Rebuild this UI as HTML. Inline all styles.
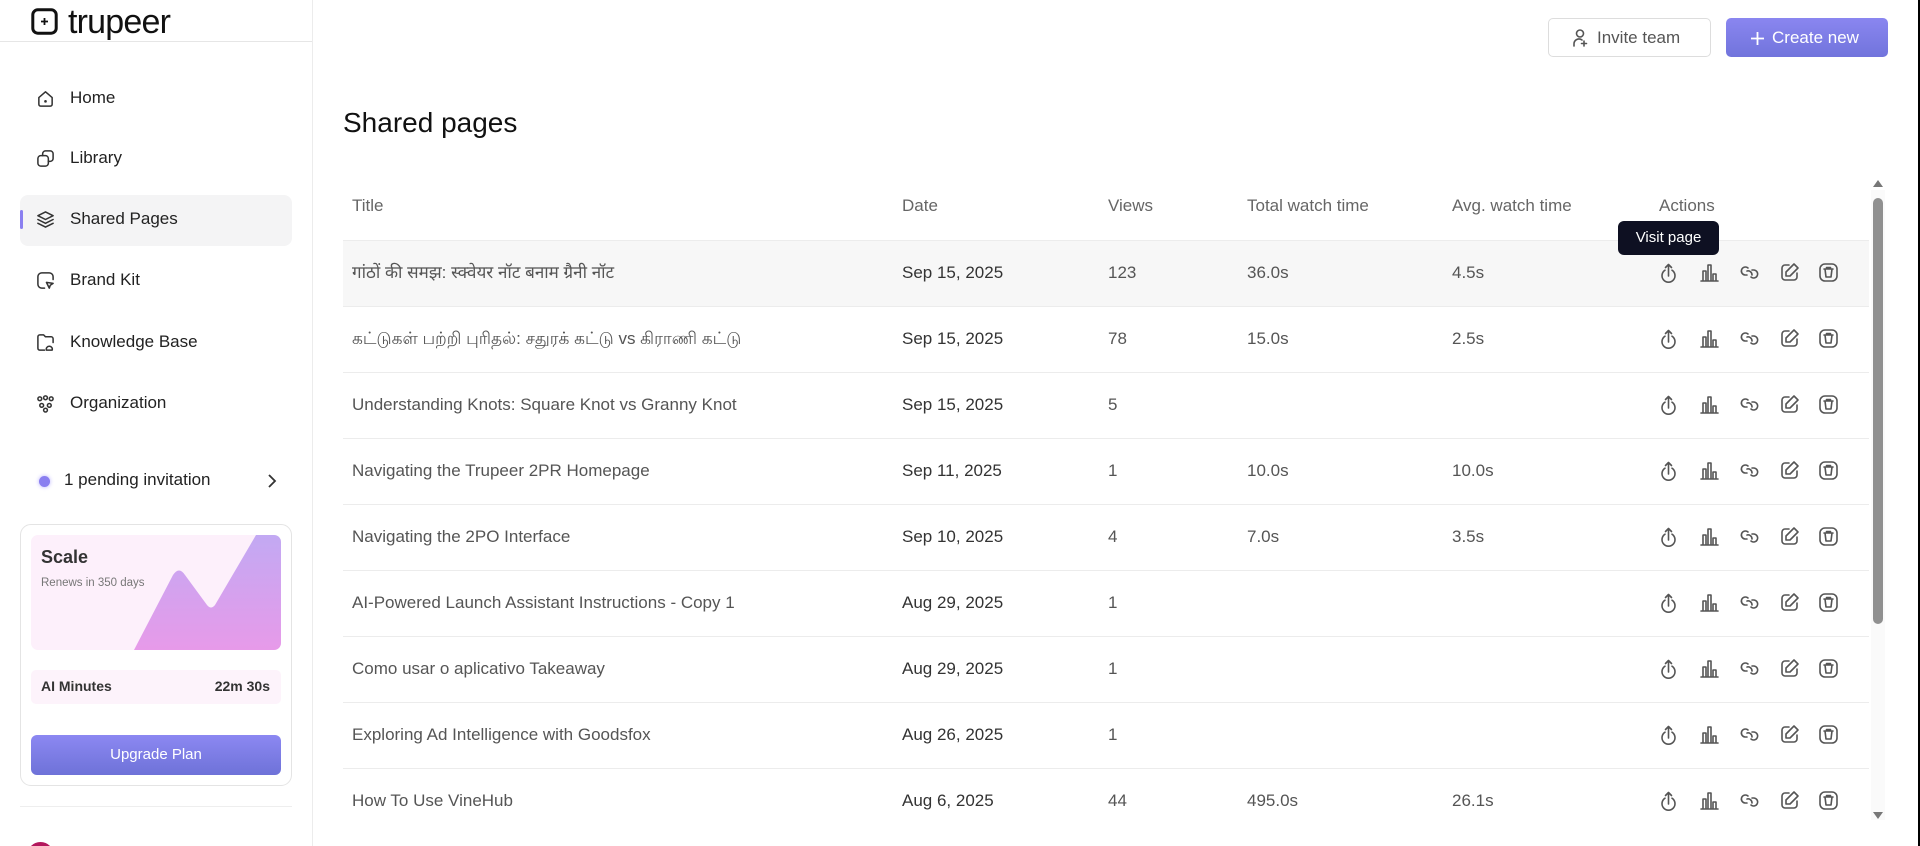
<!DOCTYPE html>
<html><head><meta charset="utf-8">
<style>
*{box-sizing:border-box;margin:0;padding:0}
html,body{width:1920px;height:846px;overflow:hidden}
body{background:#fff;font-family:"Liberation Sans","DejaVu Sans",sans-serif;position:relative;color:#222}
.abs{position:absolute}
.side{left:0;top:0;width:313px;height:846px;border-right:1px solid #ececec}
.nav{position:absolute;left:36px;font-size:17px;color:#222;display:flex;align-items:center;gap:15px}
.nav svg{width:19px;height:19px;fill:none;stroke:#333;stroke-width:1.6;stroke-linecap:round;stroke-linejoin:round}
.th{position:absolute;top:196px;font-size:17px;color:#666}
.row{position:absolute;left:343px;width:1526px;height:66px;border-top:1px solid #ececec}
.row span{position:absolute;top:0;line-height:64px;font-size:17px;color:#555}
.row .d{color:#333}
.ic{position:absolute;top:22px;width:21px;height:21px;fill:none;stroke:#555;stroke-width:1.6;stroke-linecap:round;stroke-linejoin:round}
</style></head><body>
<div class="abs side"></div>
<div class="abs" style="left:0;top:41px;width:312px;border-top:1px solid #e6e6e6"></div>
<svg class="abs" style="left:31px;top:8px" width="27" height="27" viewBox="0 0 27 27"><rect x="1.8" y="1.8" width="23.4" height="23.4" rx="5" fill="none" stroke="#111" stroke-width="3"/><path d="M13.5 10v7M10 13.5h7" stroke="#111" stroke-width="1.8"/></svg>
<div class="abs" style="left:68px;top:2px;font-size:34px;line-height:40px;color:#111;letter-spacing:-0.8px">trupeer</div>

<div class="abs" style="left:20px;top:195px;width:272px;height:51px;background:#f4f4f5;border-radius:8px"></div>
<div class="abs" style="left:20px;top:210px;width:3px;height:19px;background:#8a7ff0;border-radius:2px"></div>

<div class="nav" style="top:88px"><svg viewBox="0 0 20 20"><path d="M3 9l7-6 7 6v7a2 2 0 0 1-2 2H5a2 2 0 0 1-2-2z"/><circle cx="10" cy="13" r=".6" fill="#333"/></svg>Home</div>
<div class="nav" style="top:148px"><svg viewBox="0 0 20 20"><rect x="2" y="7" width="11" height="11" rx="3"/><path d="M7 7V5a3 3 0 0 1 3-3h5a3 3 0 0 1 3 3v5a3 3 0 0 1-3 3h-2"/></svg>Library</div>
<div class="nav" style="top:209px"><svg viewBox="0 0 20 20"><path d="M10 2l8 4-8 4-8-4z"/><path d="M2 10l8 4 8-4M2 14l8 4 8-4"/></svg>Shared Pages</div>
<div class="nav" style="top:270px"><svg viewBox="0 0 20 20"><path d="M9 18H6a4 4 0 0 1-4-4V6a4 4 0 0 1 4-4h8a4 4 0 0 1 4 4v3"/><path d="M11 12l7 1-3 2-1 3z"/></svg>Brand Kit</div>
<div class="nav" style="top:332px"><svg viewBox="0 0 20 20"><path d="M9 18H4a2 2 0 0 1-2-2V4a2 2 0 0 1 2-2h4l2 2h6a2 2 0 0 1 2 2v4"/><path d="M11 18a3 3 0 0 1 3-4 3 3 0 0 1 3 4z"/></svg>Knowledge Base</div>
<div class="nav" style="top:393px"><svg viewBox="0 0 20 20"><circle cx="4" cy="5" r="2"/><circle cx="10" cy="4" r="2"/><circle cx="16" cy="5" r="2"/><circle cx="6" cy="12" r="2"/><circle cx="14" cy="12" r="2"/><circle cx="10" cy="17" r="2"/></svg>Organization</div>

<div class="abs" style="left:39px;top:476px;width:11px;height:11px;border-radius:50%;background:#8a7ff0;box-shadow:0 0 4px #b8b0ff"></div>
<div class="abs" style="left:64px;top:470px;font-size:17px;color:#222">1 pending invitation</div>
<svg class="abs" style="left:265px;top:473px" width="14" height="16" viewBox="0 0 14 16"><path d="M4 2l6 6-6 6" fill="none" stroke="#333" stroke-width="1.8"/></svg>

<div class="abs" style="left:20px;top:524px;width:272px;height:262px;border:1px solid #e4e4e4;border-radius:11px"></div>
<div class="abs" style="left:31px;top:535px;width:250px;height:115px;background:#fdf0fb;border-radius:7px;overflow:hidden">
<svg width="250" height="115" style="position:absolute;left:0;top:0"><defs><linearGradient id="g" x1="0" y1="0" x2="0" y2="1"><stop offset="0" stop-color="#c2a9f3"/><stop offset="1" stop-color="#e79ae9"/></linearGradient></defs><path d="M103 115L142 40Q148 31 154 40L176 70Q180 75 184 70L225 0H250V115Z" fill="url(#g)"/></svg>
<div style="position:absolute;left:10px;top:12px;font-size:18px;font-weight:bold;color:#333">Scale</div>
<div style="position:absolute;left:10px;top:42px;font-size:11.5px;color:#777">Renews in 350 days</div>
</div>
<div class="abs" style="left:31px;top:670px;width:250px;height:34px;background:#fdf3fb;border-radius:5px"></div>
<div class="abs" style="left:41px;top:678px;font-size:14px;font-weight:bold;color:#333">AI Minutes</div>
<div class="abs" style="left:190px;top:678px;width:80px;text-align:right;font-size:14px;font-weight:bold;color:#333">22m 30s</div>
<div class="abs" style="left:31px;top:735px;width:250px;height:40px;border-radius:6px;background:linear-gradient(#8c88f2,#6e72d8);color:#fff;font-size:15px;text-align:center;line-height:40px">Upgrade Plan</div>
<div class="abs" style="left:20px;top:806px;width:272px;border-top:1px solid #eee"></div>
<div class="abs" style="left:27px;top:842px;width:27px;height:27px;border-radius:50%;background:#b3175c"></div>

<div class="abs" style="left:1548px;top:18px;width:163px;height:39px;border:1px solid #ddd;border-radius:5px;font-size:17px;color:#555;line-height:37px;padding-left:48px">Invite team</div>
<svg class="abs" style="left:1572px;top:28px" width="16" height="20" viewBox="0 0 16 20"><circle cx="8" cy="5.5" r="3.5" fill="none" stroke="#555" stroke-width="1.6"/><path d="M2 18v-2a5 5 0 0 1 8-4M12 13v5M9.5 15.5h5" fill="none" stroke="#555" stroke-width="1.6" stroke-linecap="round"/></svg>
<div class="abs" style="left:1726px;top:18px;width:162px;height:39px;border-radius:5px;background:linear-gradient(#8a86f0,#7174dc);color:#fff;font-size:17px;line-height:39px;padding-left:46px">Create new</div>
<svg class="abs" style="left:1750px;top:31px" width="15" height="15" viewBox="0 0 15 15"><path d="M7.5 1v13M1 7.5h13" stroke="#fff" stroke-width="1.8"/></svg>

<div class="abs" style="left:343px;top:107px;font-size:28px;color:#111">Shared pages</div>

<div class="th" style="left:352px">Title</div>
<div class="th" style="left:902px">Date</div>
<div class="th" style="left:1108px">Views</div>
<div class="th" style="left:1247px">Total watch time</div>
<div class="th" style="left:1452px">Avg. watch time</div>
<div class="th" style="left:1659px">Actions</div>

<div class="row" style="top:240px;background:#f7f7f7"><span style="left:9px">गांठों की समझ: स्क्वेयर नॉट बनाम ग्रैनी नॉट</span><span class="d" style="left:559px">Sep 15, 2025</span><span style="left:765px">123</span><span style="left:904px">36.0s</span><span style="left:1109px">4.5s</span></div>
<div class="row" style="top:306px"><span style="left:9px">கட்டுகள் பற்றி புரிதல்: சதுரக் கட்டு vs கிராணி கட்டு</span><span class="d" style="left:559px">Sep 15, 2025</span><span style="left:765px">78</span><span style="left:904px">15.0s</span><span style="left:1109px">2.5s</span></div>
<div class="row" style="top:372px"><span style="left:9px">Understanding Knots: Square Knot vs Granny Knot</span><span class="d" style="left:559px">Sep 15, 2025</span><span style="left:765px">5</span></div>
<div class="row" style="top:438px"><span style="left:9px">Navigating the Trupeer 2PR Homepage</span><span class="d" style="left:559px">Sep 11, 2025</span><span style="left:765px">1</span><span style="left:904px">10.0s</span><span style="left:1109px">10.0s</span></div>
<div class="row" style="top:504px"><span style="left:9px">Navigating the 2PO Interface</span><span class="d" style="left:559px">Sep 10, 2025</span><span style="left:765px">4</span><span style="left:904px">7.0s</span><span style="left:1109px">3.5s</span></div>
<div class="row" style="top:570px"><span style="left:9px">AI-Powered Launch Assistant Instructions - Copy 1</span><span class="d" style="left:559px">Aug 29, 2025</span><span style="left:765px">1</span></div>
<div class="row" style="top:636px"><span style="left:9px">Como usar o aplicativo Takeaway</span><span class="d" style="left:559px">Aug 29, 2025</span><span style="left:765px">1</span></div>
<div class="row" style="top:702px"><span style="left:9px">Exploring Ad Intelligence with Goodsfox</span><span class="d" style="left:559px">Aug 26, 2025</span><span style="left:765px">1</span></div>
<div class="row" style="top:768px"><span style="left:9px">How To Use VineHub</span><span class="d" style="left:559px">Aug 6, 2025</span><span style="left:765px">44</span><span style="left:904px">495.0s</span><span style="left:1109px">26.1s</span></div>

<svg width="0" height="0" style="position:absolute"><defs>
<g id="i1"><path d="M7 8.2A6.5 6.5 0 1 0 14 8.2"/><path d="M10.5 14V2.5M7.5 5.5l3-3 3 3"/></g>
<g id="i2"><path d="M2 19h17M4 19V9h3v10M9 19V3h3v16M14 19v-7h3v7"/></g>
<g id="i3"><path d="M9 6a4 4 0 1 0-3 7h2"/><path d="M12 15a4 4 0 1 0 3-7h-2"/><path d="M8 9a4 4 0 0 1 5 4"/></g>
<g id="i4"><path d="M10 3H6a3 3 0 0 0-3 3v9a3 3 0 0 0 3 3h9a3 3 0 0 0 3-3v-4"/><path d="M15 2l4 4-8 8H7v-4z"/></g>
<g id="i5"><rect x="2" y="2" width="17" height="17" rx="5"/><path d="M6 7h9M8.5 7V5.5h4V7M7 7l1 8h5l1-8"/></g>
</defs></svg>
<script>
var ys=[240,306,372,438,504,570,636,702,768],xs=[1658,1699,1739,1779,1818],h='';
ys.forEach(function(y){xs.forEach(function(x,i){h+='<svg class="ic" style="left:'+x+'px;top:'+(y+22)+'px" viewBox="0 0 21 21"><use href="#i'+(i+1)+'"/></svg>';});});
document.write(h);
</script>

<div class="abs" style="left:1618px;top:221px;width:101px;height:34px;background:#0e1022;border-radius:6px;color:#fff;font-size:15px;text-align:center;line-height:34px">Visit page</div>

<div class="abs" style="left:1871px;top:190px;width:14px;height:630px;background:#fafafa"></div>
<div class="abs" style="left:1873px;top:180px;width:0;height:0;border-left:5px solid transparent;border-right:5px solid transparent;border-bottom:7px solid #777"></div>
<div class="abs" style="left:1873px;top:198px;width:10px;height:426px;background:#909090;border-radius:5px"></div>
<div class="abs" style="left:1873px;top:812px;width:0;height:0;border-left:5px solid transparent;border-right:5px solid transparent;border-top:7px solid #777"></div>
<div class="abs" style="left:1918px;top:0;width:2px;height:846px;background:#000"></div>
</body></html>
